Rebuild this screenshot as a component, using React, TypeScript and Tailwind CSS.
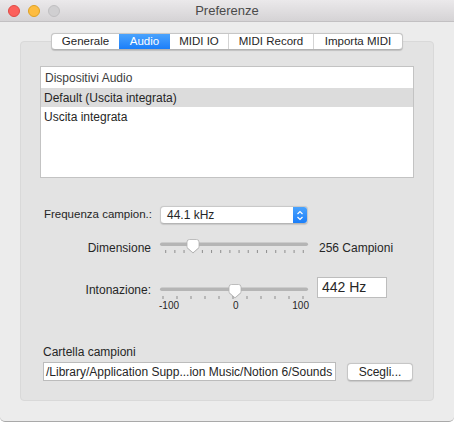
import React from "react";

function Thumb({ cx }: { cx: number }) {
  const x = cx - 6.5;
  return (
    <g transform={`translate(${x},3)`}>
      <path
        d="M0.5,3 Q0.5,0.5 3,0.5 H10 Q12.5,0.5 12.5,3 V8.5 L6.5,13.8 L0.5,8.5 Z"
        fill="#000"
        opacity="0.12"
        transform="translate(0,0.8)"
      />
      <path
        d="M0.5,3 Q0.5,0.5 3,0.5 H10 Q12.5,0.5 12.5,3 V8.5 L6.5,13.8 L0.5,8.5 Z"
        fill="#ffffff"
        stroke="#b0b0b0"
        strokeWidth="0.8"
      />
    </g>
  );
}

function Slider({
  ticks,
  start,
  step,
  thumb,
  tickY,
}: {
  ticks: number;
  start: number;
  step: number;
  thumb: number;
  tickY: number;
}) {
  return (
    <svg width="150" height="20" viewBox="0 0 150 20" className="block">
      <rect x="1" y="6.5" width="148" height="3.5" rx="1.75" fill="#b5b5b5" />
      {Array.from({ length: ticks }).map((_, i) => (
        <rect
          key={i}
          x={start + step * i - 0.5}
          y={tickY}
          width="1"
          height="3"
          fill="#8e8e8e"
        />
      ))}
      <Thumb cx={thumb} />
    </svg>
  );
}

export default function App() {
  const tabs = [
    { label: "Generale", w: "w-[67px]" },
    { label: "Audio", w: "w-[51px]", active: true },
    { label: "MIDI IO", w: "w-[58px]" },
    { label: "MIDI Record", w: "w-[85px]" },
    { label: "Importa MIDI", w: "w-[89px]" },
  ];
  return (
    <div className="w-[454px] h-[423px] bg-white font-['Liberation_Sans',sans-serif] text-[#262626]">
      <div className="w-[454px] h-[422px] flex flex-col bg-[#ececec] border-b border-[#a9a9a9] rounded-b-[5px] overflow-hidden">
        {/* title bar */}
        <div className="h-[22px] shrink-0 flex items-center relative bg-gradient-to-b from-[#ebe9eb] to-[#d5d3d5] border-b border-[#c2c0c2]">
          <div className="flex items-center gap-[8px] pl-[8px]">
            <div className="w-[12px] h-[12px] rounded-full bg-[#fc605b] border border-[#df4a45]" />
            <div className="w-[12px] h-[12px] rounded-full bg-[#fdbc40] border border-[#dea123]" />
            <div className="w-[12px] h-[12px] rounded-full bg-[#d0cfd1] border border-[#c0bfc1]" />
          </div>
          <div className="absolute inset-0 flex items-center justify-center text-[13px] text-[#4a4a4a]">
            Preferenze
          </div>
        </div>

        {/* body */}
        <div className="flex-1 flex flex-col px-[20px] pt-[11px]">
          {/* tabs */}
          <div className="relative z-10 flex justify-center">
            <div className="flex h-[17px] bg-white border border-[#c6c6c6] border-b-[#b3b3b3] rounded-[4px] overflow-hidden shadow-[0_0.5px_1px_rgba(0,0,0,0.15)]">
              {tabs.map((t, i) => (
                <div
                  key={t.label}
                  className={
                    "h-full flex items-center justify-center text-[11.5px] leading-none " +
                    t.w +
                    " " +
                    (t.active
                      ? "bg-gradient-to-b from-[#4aa3fd] to-[#1a7ef9] text-white"
                      : "text-[#262626]") +
                    (i > 0 && !t.active && !tabs[i - 1].active
                      ? " border-l border-[#d4d4d4]"
                      : "")
                  }
                >
                  {t.label}
                </div>
              ))}
            </div>
          </div>

          {/* group box */}
          <div className="-mt-[9px] bg-[#e3e3e3] border border-[#d9d9d9] rounded-[4px] px-[19px] pt-[24px] pb-[19px] flex flex-col">
            {/* list */}
            <div className="h-[112px] bg-white border border-[#c3c3c3] flex flex-col text-[12px]">
              <div className="h-[21px] shrink-0 flex items-center pl-[4px] text-[#3c3c3c]">
                Dispositivi Audio
              </div>
              <div className="h-[19px] shrink-0 flex items-center pl-[3px] bg-[#dcdcdc]">
                Default (Uscita integrata)
              </div>
              <div className="h-[19px] shrink-0 flex items-center pl-[3px]">
                Uscita integrata
              </div>
            </div>

            {/* frequency */}
            <div className="mt-[28px] h-[18px] flex items-center text-[12px]">
              <div className="w-[112px] flex justify-end whitespace-nowrap text-[11.5px]">Frequenza campion.:</div>
              <div className="ml-[8px] w-[148px] h-[18px] flex bg-white rounded-[4px] border border-[#c9c9c9] border-b-[#b5b5b5] shadow-[0_0.5px_1px_rgba(0,0,0,0.12)] overflow-hidden">
                <div className="flex-1 flex items-center pl-[6px]">44.1 kHz</div>
                <div className="w-[14px] h-full bg-gradient-to-b from-[#4aa3fd] to-[#1a7ef9] flex items-center justify-center">
                  <svg width="8" height="11" viewBox="0 0 8 11">
                    <path d="M1.5,4 L4,1.5 L6.5,4" fill="none" stroke="#fff" strokeWidth="1.2" />
                    <path d="M1.5,7 L4,9.5 L6.5,7" fill="none" stroke="#fff" strokeWidth="1.2" />
                  </svg>
                </div>
              </div>
            </div>

            {/* dimensione */}
            <div className="mt-[12px] h-[20px] flex items-center text-[12px]">
              <div className="w-[111px] text-right pt-[3px]">Dimensione</div>
              <div className="ml-[8px]">
                <Slider ticks={16} start={6.7} step={9.17} thumb={34} tickY={14} />
              </div>
              <div className="ml-[10px] pt-[3px]">256 Campioni</div>
            </div>

            {/* intonazione */}
            <div className="mt-[21px] flex items-start text-[12px]">
              <div className="w-[111px] h-[21px] flex items-center justify-end pt-[4px]">
                Intonazione:
              </div>
              <div className="ml-[8px] mt-[4px] w-[150px] flex flex-col">
                <Slider ticks={11} start={4} step={14} thumb={76} tickY={15} />
                <div className="flex justify-between text-[10px] leading-[12px] -mt-[1px]">
                  <span>-100</span>
                  <span>0</span>
                  <span>100</span>
                </div>
              </div>
              <div className="ml-[8px] w-[70px] h-[21px] bg-white border border-[#bdbdbd] flex items-center pl-[4px] text-[14px]">
                442 Hz
              </div>
            </div>

            {/* cartella */}
            <div className="mt-[33px] h-[14px] leading-[14px] text-[12px] pl-[3px]">
              Cartella campioni
            </div>
            <div className="mt-[3px] flex items-center text-[12px]">
              <div className="ml-[3px] w-[293px] h-[19px] bg-white border border-[#bcbcbc] flex items-center pl-[2px] whitespace-nowrap overflow-hidden">
                /Library/Application Supp...ion Music/Notion 6/Sounds
              </div>
              <div className="ml-[11px] w-[66px] h-[18px] bg-white border border-[#c6c6c6] border-b-[#b3b3b3] rounded-[4px] shadow-[0_0.5px_1px_rgba(0,0,0,0.12)] flex items-center justify-center">
                Scegli...
              </div>
            </div>
          </div>
        </div>
      </div>
    </div>
  );
}
